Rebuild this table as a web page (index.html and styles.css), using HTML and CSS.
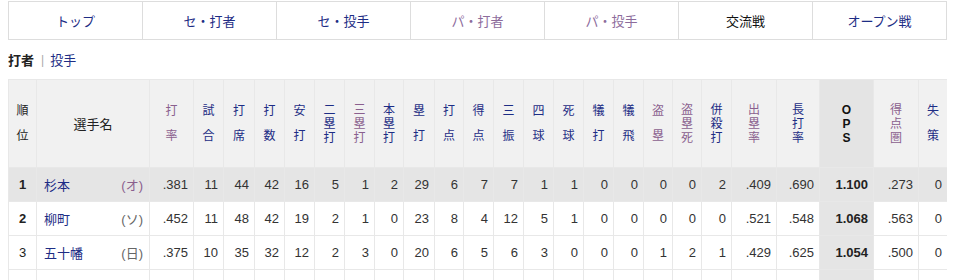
FILE: index.html
```html
<!DOCTYPE html>
<html lang="ja">
<head>
<meta charset="utf-8">
<title>交流戦 打者成績</title>
<link rel="stylesheet" href="styles.css">
</head>
<body>
<nav class="tabs">
  <a class="tab link" href="#">トップ</a>
  <a class="tab link" href="#">セ・打者</a>
  <a class="tab link" href="#">セ・投手</a>
  <a class="tab visited" href="#">パ・打者</a>
  <a class="tab visited" href="#">パ・投手</a>
  <span class="tab current">交流戦</span>
  <a class="tab link" href="#">オープン戦</a>
</nav>
<div class="sub">
  <span class="sub-cur">打者</span><span class="sub-sep">|</span><a class="link" href="#">投手</a>
</div>
<table class="stats">
  <colgroup>
    <col class="w28"><col class="w113"><col class="w44"><col class="w30"><col class="w31"><col class="w30"><col class="w30"><col class="w30"><col class="w30"><col class="w29"><col class="w31"><col class="w29"><col class="w30"><col class="w30"><col class="w30"><col class="w30"><col class="w30"><col class="w30"><col class="w29"><col class="w29"><col class="w30"><col class="w45"><col class="w43"><col class="w54"><col class="w45"><col class="w29">
  </colgroup>
  <thead>
    <tr>
      <th class="h2 plain">順<br>位</th>
      <th class="plain name-h">選手名</th>
      <th class="h2 pur">打<br>率</th>
      <th class="h2 blu">試<br>合</th>
      <th class="h2 blu">打<br>席</th>
      <th class="h2 blu">打<br>数</th>
      <th class="h2 blu">安<br>打</th>
      <th class="h3 blu">二<br>塁<br>打</th>
      <th class="h3 pur">三<br>塁<br>打</th>
      <th class="h3 blu">本<br>塁<br>打</th>
      <th class="h2 blu">塁<br>打</th>
      <th class="h2 blu">打<br>点</th>
      <th class="h2 blu">得<br>点</th>
      <th class="h2 blu">三<br>振</th>
      <th class="h2 blu">四<br>球</th>
      <th class="h2 blu">死<br>球</th>
      <th class="h2 blu">犠<br>打</th>
      <th class="h2 blu">犠<br>飛</th>
      <th class="h2 pur">盗<br>塁</th>
      <th class="h3 pur">盗<br>塁<br>死</th>
      <th class="h3 blu">併<br>殺<br>打</th>
      <th class="h3 pur">出<br>塁<br>率</th>
      <th class="h3 blu">長<br>打<br>率</th>
      <th class="h3 ops-h">O<br>P<br>S</th>
      <th class="h3 pur">得<br>点<br>圏</th>
      <th class="h2 blu">失<br>策</th>
    </tr>
  </thead>
  <tbody>
    <tr class="odd">
      <td class="rank strong">1</td>
      <td class="player"><div class="pl"><a class="link" href="#">杉本</a><span class="team team-o">(オ)</span></div></td>
      <td>.381</td><td>11</td><td>44</td><td>42</td><td>16</td><td>5</td><td>1</td><td>2</td><td>29</td><td>6</td><td>7</td><td>7</td><td>1</td><td>1</td><td>0</td><td>0</td><td>0</td><td>0</td><td>2</td><td>.409</td><td>.690</td><td class="ops">1.100</td><td>.273</td><td>0</td>
    </tr>
    <tr>
      <td class="rank strong">2</td>
      <td class="player"><div class="pl"><a class="link" href="#">柳町</a><span class="team">(ソ)</span></div></td>
      <td>.452</td><td>11</td><td>48</td><td>42</td><td>19</td><td>2</td><td>1</td><td>0</td><td>23</td><td>8</td><td>4</td><td>12</td><td>5</td><td>1</td><td>0</td><td>0</td><td>0</td><td>0</td><td>0</td><td>.521</td><td>.548</td><td class="ops">1.068</td><td>.563</td><td>0</td>
    </tr>
    <tr>
      <td class="rank">3</td>
      <td class="player"><div class="pl"><a class="link" href="#">五十幡</a><span class="team">(日)</span></div></td>
      <td>.375</td><td>10</td><td>35</td><td>32</td><td>12</td><td>2</td><td>3</td><td>0</td><td>20</td><td>6</td><td>5</td><td>6</td><td>3</td><td>0</td><td>0</td><td>0</td><td>1</td><td>2</td><td>1</td><td>.429</td><td>.625</td><td class="ops">1.054</td><td>.500</td><td>0</td>
    </tr>
    <tr>
      <td class="rank">&nbsp;</td><td class="player">&nbsp;</td>
      <td></td><td></td><td></td><td></td><td></td><td></td><td></td><td></td><td></td><td></td><td></td><td></td><td></td><td></td><td></td><td></td><td></td><td></td><td></td><td></td><td></td><td class="ops"></td><td></td><td></td>
    </tr>
  </tbody>
</table>
</body>
</html>
```

FILE: styles.css
```css
html, body {
  background: #ffffff;
}
body {
  margin: 1px 8px 8px;
  font-family: "Liberation Sans", "Noto Sans CJK JP", sans-serif;
  font-size: 13px;
  color: #333333;
}
a {
  text-decoration: none;
}
.link {
  color: #1d2d85;
}
.visited {
  color: #8d6c9c;
}

.tabs {
  display: flex;
  border: 1px solid #dddddd;
  height: 37px;
}
.tab {
  flex: 1 1 0;
  display: flex;
  align-items: center;
  justify-content: center;
  border-left: 1px solid #dddddd;
  font-family: "Noto Sans CJK JP", sans-serif;
  font-size: 13px;
}
.tab:first-child {
  border-left: none;
}
.current {
  color: #111111;
}

.sub {
  display: flex;
  align-items: center;
  height: 39px;
  font-family: "Noto Sans CJK JP", sans-serif;
  font-size: 13px;
}
.sub-cur {
  font-weight: bold;
  color: #222222;
}
.sub-sep {
  color: #aaaaaa;
  font-family: "Liberation Sans", sans-serif;
  font-size: 12px;
  margin: 0 6px 0 7px;
}

.stats {
  width: 939px;
  table-layout: fixed;
  border-collapse: collapse;
}
.w28 { width: 28px; }
.w29 { width: 29px; }
.w30 { width: 30px; }
.w31 { width: 31px; }
.w43 { width: 43px; }
.w44 { width: 44px; }
.w45 { width: 45px; }
.w54 { width: 54px; }
.w113 { width: 113px; }

.stats th,
.stats td {
  border: 1px solid #e8e8e8;
  padding: 0;
}
.stats th {
  height: 87px;
  background: #f1f1f1;
  font-family: "Liberation Sans", "Noto Sans CJK JP", sans-serif;
  font-weight: normal;
  font-size: 12px;
  text-align: center;
  vertical-align: middle;
}
.stats th.h2 {
  line-height: 25px;
}
.stats th.h3 {
  line-height: 14px;
}
.stats th.plain {
  color: #222222;
}
.stats th.name-h {
  font-size: 13px;
}
.stats th.pur {
  color: #8a5f8e;
}
.stats th.blu {
  color: #1d2d85;
}
.stats th.ops-h {
  background: #e4e4e4;
  color: #111111;
  font-weight: bold;
  font-size: 12px;
}

.stats td {
  height: 33px;
  text-align: right;
  padding-right: 5px;
  vertical-align: middle;
  color: #333333;
  background: #ffffff;
}
.stats tr.odd td {
  background: #e5e5e5;
}
.stats td.rank {
  text-align: center;
  padding-right: 0;
  color: #222222;
}
.stats td.strong {
  font-weight: bold;
}
.stats td.player {
  text-align: left;
  padding: 0 6px 0 7px;
}
.pl {
  display: flex;
  justify-content: space-between;
  align-items: center;
  font-family: "Noto Sans CJK JP", sans-serif;
}
.pl .link {
  font-family: "Noto Sans CJK JP", sans-serif;
}
.team {
  color: #666666;
  font-family: "Liberation Sans", "Noto Sans CJK JP", sans-serif;
}
.team-o {
  color: #8a5f8e;
}
.stats td.ops {
  background: #e5e5e5;
  font-weight: bold;
  color: #222222;
}
```
